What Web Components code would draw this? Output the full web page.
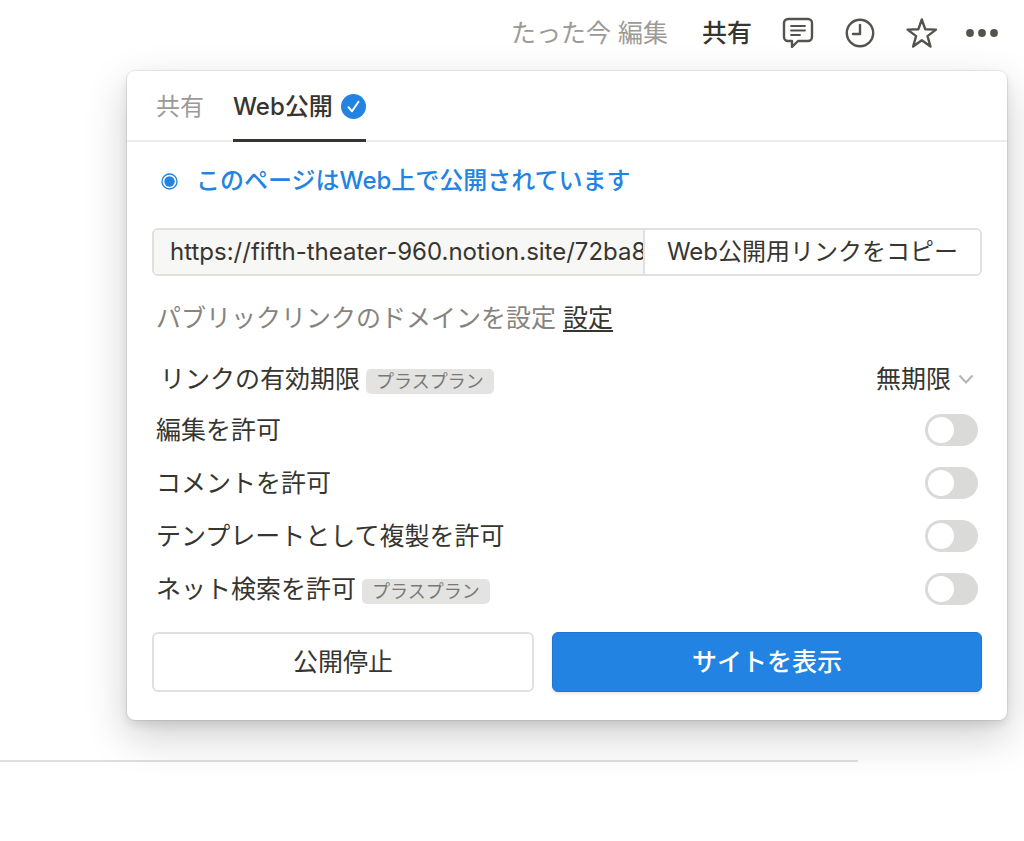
<!DOCTYPE html>
<html lang="ja">
<head>
<meta charset="utf-8">
<meta name="viewport" content="width=device-width, initial-scale=1">
<title>Web公開</title>
<style>
  body {
    margin: 0;
    min-height: 100vh;
    background: #fff;
    color: #37352f;
    font-family: Inter, "Noto Sans CJK JP", sans-serif;
    font-size: 25px;
    line-height: 32px;
    --text: #37352f;
    --muted: #9b9a97;
    --blue: #2383e2;
    --line: #e0e0df;
  }
  hr {
    margin: 40px 166px 0 0;
    border: 0;
    border-top: 2px solid #dfdfde;
  }
</style>
</head>
<body>
<top-bar edited="たった今 編集">
  <icon-button label="コメント">
    <svg viewBox="0 0 32 32"><path d="M6 2h20a4 4 0 0 1 4 4v14a4 4 0 0 1-4 4H16l-6 6v-6H6a4 4 0 0 1-4-4V6a4 4 0 0 1 4-4z"/><path d="M9 9h14M9 13.500h14M9 18h9" stroke-width="1.800"/></svg>
  </icon-button>
  <icon-button label="更新履歴">
    <svg viewBox="0 0 32 32"><circle cx="16" cy="16" r="13.200"/><path d="M16 8v9H9"/></svg>
  </icon-button>
  <icon-button label="お気に入り">
    <svg viewBox="0 0 32 32"><path d="M15.800 2.500l3.500 9.800 10.700.3-8.500 6.500 3 10.400-8.700-6.200-8.700 6.200 3-10.400-8.500-6.500 10.700-.3z"/></svg>
  </icon-button>
  <icon-button label="その他">
    <svg viewBox="0 0 32 32"><g fill="currentColor" stroke="none"><circle cx="2" cy="16" r="3.900"/><circle cx="14" cy="16" r="3.900"/><circle cx="26" cy="16" r="3.900"/></g></svg>
  </icon-button>
</top-bar>

<share-panel>
  <panel-tab slot="tabs">共有</panel-tab>
  <panel-tab slot="tabs" active>Web公開</panel-tab>
  <publish-status>このページはWeb上で公開されています</publish-status>
  <copy-link url="https://fifth-theater-960.notion.site/72ba8">Web公開用リンクをコピー</copy-link>
  <domain-note action="設定">パブリックリンクのドメインを設定</domain-note>
  <select-row label="リンクの有効期限" badge="プラスプラン" value="無期限"></select-row>
  <toggle-row label="編集を許可"></toggle-row>
  <toggle-row label="コメントを許可"></toggle-row>
  <toggle-row label="テンプレートとして複製を許可"></toggle-row>
  <toggle-row label="ネット検索を許可" badge="プラスプラン"></toggle-row>
  <action-button slot="actions">公開停止</action-button>
  <action-button slot="actions" primary>サイトを表示</action-button>
</share-panel>
<hr>

<script>
// attach an open shadow root with the given markup
function render(el, html) {
  const root = el.attachShadow({ mode: "open" });
  const template = document.createElement("template");
  template.innerHTML = html;
  root.appendChild(template.content.cloneNode(true));
  return root;
}

class TopBar extends HTMLElement {
  constructor() {
    super();
    render(this, `
      <style>
        :host {
          display: flex;
          align-items: center;
          justify-content: flex-end;
          gap: 30px;
          padding: 17px 24px 22px;
        }
        .edited { color: var(--muted); }
        button {
          margin: 0 0 0 4px;
          padding: 0;
          border: 0;
          background: none;
          color: inherit;
          font: inherit;
          font-weight: 500;
          cursor: pointer;
        }
      </style>
      <span class="edited">${this.getAttribute("edited")}</span>
      <button type="button">共有</button>
      <slot></slot>
    `);
  }
}

class IconButton extends HTMLElement {
  constructor() {
    super();
    render(this, `
      <style>
        :host { display: block; }
        button {
          display: block;
          width: 32px;
          height: 32px;
          padding: 0;
          border: 0;
          background: none;
          cursor: pointer;
        }
        ::slotted(svg) {
          display: block;
          width: 32px;
          height: 32px;
          overflow: visible;
          fill: none;
          stroke: currentColor;
          stroke-width: 2.4;
          stroke-linejoin: round;
          stroke-linecap: round;
          color: #55534e;
        }
      </style>
      <button type="button" aria-label="${this.getAttribute("label")}"><slot></slot></button>
    `);
  }
}

class SharePanel extends HTMLElement {
  constructor() {
    super();
    render(this, `
      <style>
        :host {
          display: block;
          position: relative;
          margin: 0 17px 0 127px;
          background: #fff;
          border-radius: 8px;
          box-shadow: 0 0 0 1px rgba(15, 15, 15, 0.07),
            0 5px 10px rgba(15, 15, 15, 0.1),
            0 16px 43px rgba(15, 15, 15, 0.2);
        }
        nav {
          display: flex;
          gap: 29px;
          height: 69px;
          padding: 0 29px;
          border-bottom: 2px solid #ededec;
        }
        .body { padding: 23px 25px 28px; }
        .actions {
          display: grid;
          grid-template-columns: 8fr 9fr;
          gap: 18px;
          margin-top: 17px;
        }
      </style>
      <nav><slot name="tabs"></slot></nav>
      <div class="body">
        <slot></slot>
        <div class="actions"><slot name="actions"></slot></div>
      </div>
    `);
  }
}

class PanelTab extends HTMLElement {
  constructor() {
    super();
    const check = `
      <svg viewBox="0 0 25 25" aria-hidden="true">
        <circle cx="12.500" cy="12.500" r="12.500" fill="var(--blue)"/>
        <path d="M7.500 13.200l3.500 4.100 6.500-9.500" fill="none" stroke="#fff" stroke-width="2" stroke-linecap="round" stroke-linejoin="round"/>
      </svg>`;
    render(this, `
      <style>
        :host { display: block; height: 71px; font-size: 24px; }
        button {
          display: flex;
          align-items: center;
          gap: 8px;
          box-sizing: border-box;
          height: 100%;
          padding: 3px 0 0;
          border: 0;
          border-bottom: 3px solid transparent;
          background: none;
          color: var(--muted);
          font: inherit;
          cursor: pointer;
        }
        :host([active]) button {
          border-color: var(--text);
          color: var(--text);
          font-weight: 500;
        }
        svg { width: 25px; height: 25px; }
      </style>
      <button type="button"><slot></slot>${this.hasAttribute("active") ? check : ""}</button>
    `);
  }
}

class PublishStatus extends HTMLElement {
  constructor() {
    super();
    render(this, `
      <style>
        :host {
          display: flex;
          align-items: center;
          gap: 18px;
          padding-left: 9px;
          color: var(--blue);
          font-size: 24px;
          font-weight: 500;
        }
        svg { width: 17px; height: 17px; }
      </style>
      <svg viewBox="0 0 17 17" aria-hidden="true">
        <circle cx="8.500" cy="8.500" r="7.500" fill="none" stroke="currentColor" stroke-width="1.300"/>
        <circle cx="8.500" cy="8.500" r="5.200" fill="currentColor"/>
      </svg>
      <span><slot></slot></span>
    `);
  }
}

class CopyLink extends HTMLElement {
  constructor() {
    super();
    render(this, `
      <style>
        :host {
          display: flex;
          box-sizing: border-box;
          height: 48px;
          margin-top: 31px;
          border: 2px solid var(--line);
          border-radius: 6px;
          overflow: hidden;
          font-size: 24px;
        }
        input {
          flex: 1;
          min-width: 0;
          padding: 0 0 0 16px;
          border: 0;
          outline: 0;
          background: #f7f7f5;
          color: var(--text);
          font: inherit;
        }
        button {
          padding: 0 22px;
          border: 0;
          border-left: 2px solid var(--line);
          background: #fff;
          color: var(--text);
          font: inherit;
          white-space: nowrap;
          cursor: pointer;
        }
      </style>
      <input type="text" readonly aria-label="公開リンク" value="${this.getAttribute("url")}">
      <button type="button"><slot></slot></button>
    `);
    this.shadowRoot.querySelector("button").addEventListener("click", this.copy.bind(this));
  }

  copy() {
    const input = this.shadowRoot.querySelector("input");
    input.select();
    document.execCommand("copy");
  }
}

class DomainNote extends HTMLElement {
  constructor() {
    super();
    render(this, `
      <style>
        :host {
          display: block;
          margin: 26px 0 20px;
          padding: 0 4px;
          color: #85847f;
        }
        a { color: var(--text); text-underline-offset: 3px; }
      </style>
      <slot></slot> <a href="#">${this.getAttribute("action")}</a>
    `);
  }
}

class PlanBadge extends HTMLElement {
  constructor() {
    super();
    render(this, `
      <style>
        :host {
          display: block;
          margin-top: 5px;
          padding: 0 10px;
          border-radius: 5px;
          background: #e3e3e2;
          color: #787774;
          font-size: 18px;
          line-height: 25px;
        }
      </style>
      <slot></slot>
    `);
  }
}

const rowStyle = `
  :host {
    display: flex;
    align-items: center;
    justify-content: space-between;
    height: 53px;
    padding: 0 4px;
  }
  .name { display: flex; align-items: center; gap: 6px; }
`;

function badgeFor(el) {
  return el.hasAttribute("badge") ? `<plan-badge>${el.getAttribute("badge")}</plan-badge>` : "";
}

class SelectRow extends HTMLElement {
  constructor() {
    super();
    render(this, `
      <style>
        ${rowStyle}
        :host { height: 49px; padding: 0 8px; }
        .picker { display: flex; align-items: center; }
        select {
          appearance: none;
          margin: 0 -24px 0 0;
          padding: 0 30px 0 0;
          border: 0;
          background: none;
          color: inherit;
          font: inherit;
          cursor: pointer;
        }
        svg { width: 16px; height: 16px; pointer-events: none; }
      </style>
      <div class="name">
        <label for="choice">${this.getAttribute("label")}</label>
        ${badgeFor(this)}
      </div>
      <div class="picker">
        <select id="choice"><option>${this.getAttribute("value")}</option></select>
        <svg viewBox="0 0 16 16" aria-hidden="true"><path d="M1.500 4.500L8 11.500l6.500-7" fill="none" stroke="#b4b4b2" stroke-width="2"/></svg>
      </div>
    `);
  }
}

class ToggleRow extends HTMLElement {
  constructor() {
    super();
    render(this, `
      <style>
        ${rowStyle}
        input {
          appearance: none;
          display: flex;
          box-sizing: border-box;
          width: 53px;
          height: 32px;
          margin: 0;
          padding: 3px;
          border-radius: 16px;
          background: #dadad9;
          cursor: pointer;
        }
        input::before {
          content: "";
          width: 26px;
          height: 26px;
          border-radius: 50%;
          background: #fff;
        }
        input:checked {
          justify-content: flex-end;
          background: var(--blue);
        }
      </style>
      <div class="name">
        <label for="toggle">${this.getAttribute("label")}</label>
        ${badgeFor(this)}
      </div>
      <input id="toggle" type="checkbox" role="switch">
    `);
  }
}

class ActionButton extends HTMLElement {
  constructor() {
    super();
    render(this, `
      <style>
        :host { display: block; }
        button {
          width: 100%;
          height: 60px;
          padding: 0;
          border: 2px solid var(--line);
          border-radius: 6px;
          background: #fff;
          color: var(--text);
          font: inherit;
          cursor: pointer;
        }
        :host([primary]) button {
          border: 1px solid #1f76cc;
          background: var(--blue);
          box-shadow: 0 2px 3px rgba(15, 15, 15, 0.1);
          color: #fff;
          font-weight: 500;
        }
      </style>
      <button type="button"><slot></slot></button>
    `);
  }
}

customElements.define("top-bar", TopBar);
customElements.define("icon-button", IconButton);
customElements.define("share-panel", SharePanel);
customElements.define("panel-tab", PanelTab);
customElements.define("publish-status", PublishStatus);
customElements.define("copy-link", CopyLink);
customElements.define("domain-note", DomainNote);
customElements.define("plan-badge", PlanBadge);
customElements.define("select-row", SelectRow);
customElements.define("toggle-row", ToggleRow);
customElements.define("action-button", ActionButton);
</script>
</body>
</html>
